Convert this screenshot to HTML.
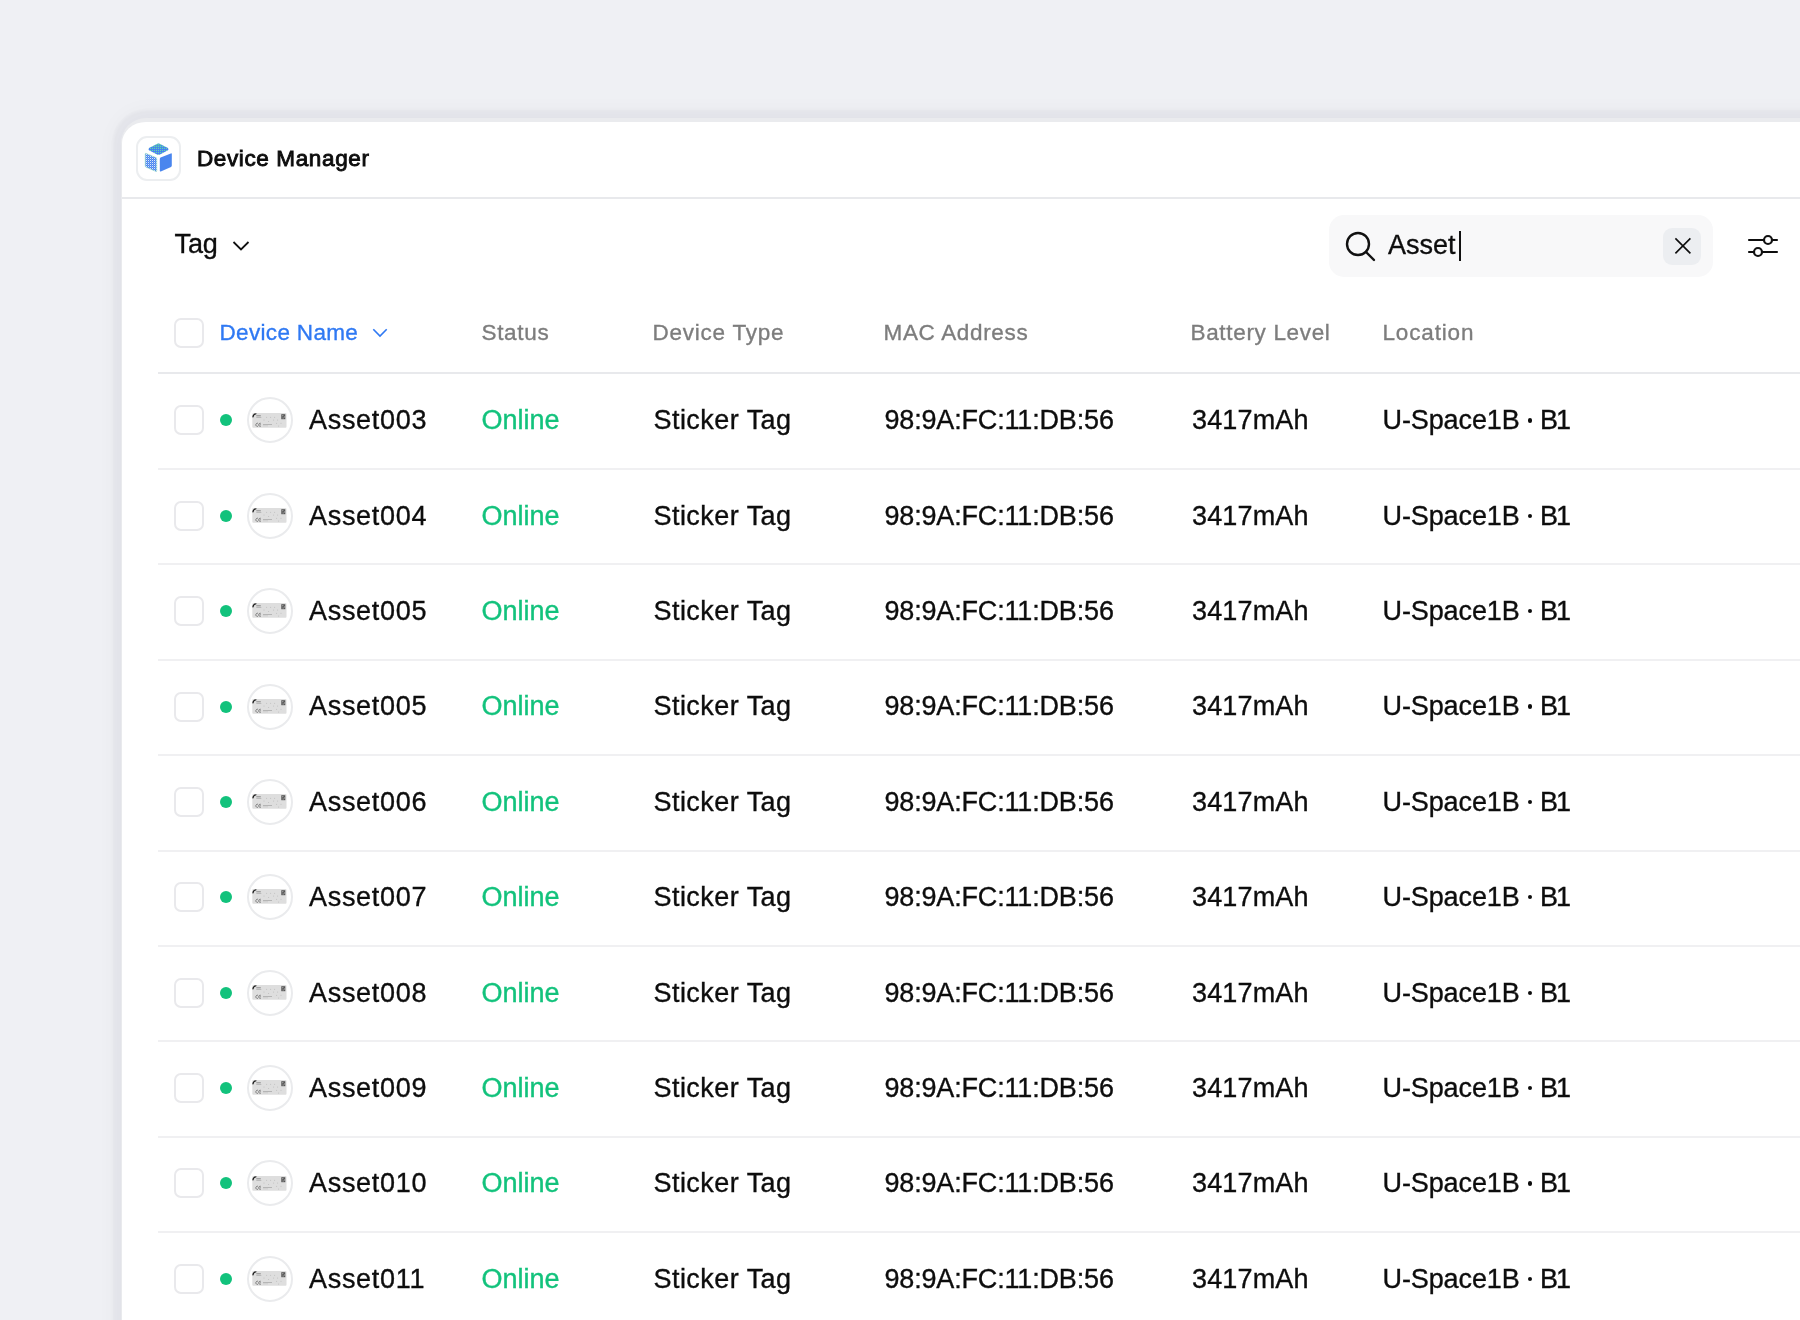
<!DOCTYPE html>
<html><head><meta charset="utf-8">
<style>
html,body{margin:0;padding:0;}
body{width:1800px;height:1320px;overflow:hidden;background:#eff0f4;position:relative;font-family:"Liberation Sans",sans-serif;}
.layer{position:absolute;left:0;top:0;width:1800px;height:1320px;will-change:transform;}
.card{position:absolute;left:121px;top:118px;width:1760px;height:1300px;background:#fff;border-left:1px solid #e9eaed;border-top:4px solid #eaebee;border-radius:25px 0 0 0;box-shadow:0 0 3px 8px rgba(25,35,70,0.03), 0 0 22px 6px rgba(25,35,70,0.035);}
.t{position:absolute;white-space:nowrap;line-height:1;-webkit-text-stroke:0.35px currentColor;}
.ic{position:absolute;}
.cb{position:absolute;left:174px;width:26px;height:26px;border:2px solid #e9e9ec;border-radius:7px;background:#fff;}
.dot{position:absolute;left:219.5px;width:12px;height:12px;border-radius:50%;background:#12c27c;}
.av{position:absolute;left:247px;width:42px;height:42px;border:2px solid #eaebed;border-radius:50%;background:#fff;box-sizing:content-box;}
.av svg{display:block;}
.md{position:absolute;left:1527.5px;width:4.3px;height:4.3px;border-radius:50%;background:#0d0d0d;}
.sep{position:absolute;left:158px;right:0;height:2px;background:#f0f0f2;}
</style></head><body>
<div class="card"></div>
<div class="layer">
<!-- title bar -->
<div style="position:absolute;left:136px;top:136px;width:41px;height:41px;border:2px solid #eceef0;border-radius:11px;background:#fff;"></div>
<svg class="ic" style="left:136px;top:136px" width="45" height="45" viewBox="136 136 45 45">
  <defs>
    <pattern id="pg" patternUnits="userSpaceOnUse" x="0" y="0" width="2" height="2"><rect width="2" height="2" fill="#4683f0"/><rect width="1" height="1" fill="#66d9a6"/></pattern>
    <pattern id="pw" patternUnits="userSpaceOnUse" x="0" y="0" width="2" height="2"><rect width="2" height="2" fill="#4a86ef"/><rect width="1" height="1" fill="#d8e6fb"/><rect x="1" y="1" width="1" height="1" fill="#6f9ff2"/></pattern>
  <linearGradient id="tg" x1="0" y1="0" x2="0" y2="1"><stop offset="0" stop-color="#5edc9c" stop-opacity="0.5"/><stop offset="0.45" stop-color="#5edc9c" stop-opacity="0"/></linearGradient>
  </defs>
  <path d="M158.5 143.6 Q159.5 143.6 160.5 144.2 L168 148 Q169 149.2 168 150.2 L160.5 154.2 Q158.5 155.2 156.5 154.2 L149 150.2 Q148 149.2 149 148 L156.5 144.2 Q157.5 143.6 158.5 143.6Z" fill="url(#pg)"/>
  <path d="M158.5 143.6 Q159.5 143.6 160.5 144.2 L168 148 Q169 149.2 168 150.2 L160.5 154.2 Q158.5 155.2 156.5 154.2 L149 150.2 Q148 149.2 149 148 L156.5 144.2 Q157.5 143.6 158.5 143.6Z" fill="url(#tg)"/>
  <path d="M145.2 154 Q145.2 153 146.2 153.4 L156 157.6 Q156.8 158 156.8 159 L156.8 170.8 Q156.8 171.8 155.8 171.4 L146 167.2 Q145.2 166.8 145.2 165.8Z" fill="url(#pw)" stroke="#9fe3c4" stroke-width="0.6"/>
  <path d="M159.8 159 Q159.8 158 160.6 157.6 L170.8 153.4 Q171.8 153 171.8 154 L171.8 165.6 Q171.8 166.6 171 167 L160.8 171.4 Q159.8 171.8 159.8 170.8Z" fill="#4a86ee"/>
</svg>
<div class="t" style="left:197px;top:147.55px;font-size:22.5px;font-weight:normal;letter-spacing:0.62px;-webkit-text-stroke:0.9px #0d0d0d;color:#0d0d0d;">Device Manager</div>
<div style="position:absolute;left:122px;right:0;top:197px;height:2px;background:#e8e9ec;"></div>
<!-- toolbar -->
<div class="t" style="left:174.5px;top:231.24px;font-size:27px;color:#0d0d0d;letter-spacing:-0.1px">Tag</div>
<svg class="ic" style="left:232px;top:240px" width="18" height="12" viewBox="0 0 18 12"><path d="M1.5 2 L9 9.5 L16.5 2" fill="none" stroke="#111" stroke-width="1.8"/></svg>
<div style="position:absolute;left:1329px;top:215px;width:384px;height:62px;border-radius:15px;background:#f8f8f9;"></div>
<svg class="ic" style="left:1343px;top:229px" width="36" height="36" viewBox="0 0 36 36"><circle cx="15" cy="15" r="11" fill="none" stroke="#111" stroke-width="2.4"/><path d="M23 23 L31 31" stroke="#111" stroke-width="2.4" stroke-linecap="round"/></svg>
<div class="t" style="left:1388px;top:231.54px;font-size:27px;color:#0d0d0d;">Asset</div>
<div style="position:absolute;left:1459px;top:231px;width:2px;height:30px;background:#111;"></div>
<div style="position:absolute;left:1663px;top:227.5px;width:38px;height:37px;border-radius:9px;background:#eceef1;"></div>
<svg class="ic" style="left:1672px;top:236px" width="20" height="20" viewBox="0 0 20 20"><path d="M3.4 2.4 L18.4 17.4 M18.4 2.4 L3.4 17.4" stroke="#0d0d0d" stroke-width="1.6"/></svg>
<svg class="ic" style="left:1746px;top:232px" width="34" height="28" viewBox="0 0 34 28"><path d="M3 8 H31 M3 20 H31" stroke="#0d0d0d" stroke-width="2.1" stroke-linecap="round"/><circle cx="22" cy="8" r="4" fill="#fff" stroke="#111" stroke-width="2.2"/><circle cx="12" cy="20" r="4" fill="#fff" stroke="#111" stroke-width="2.2"/></svg>
<!-- header -->
<div class="cb" style="top:317.5px"></div>
<div class="t" style="left:219.5px;top:321.75px;font-size:22.5px;color:#2f79f3;letter-spacing:0.33px">Device Name</div>
<svg class="ic" style="left:372px;top:328px" width="16" height="10" viewBox="0 0 16 10"><path d="M1.3 1.3 L8 8.1 L14.7 1.3" fill="none" stroke="#2f79f3" stroke-width="1.6"/></svg>
<div class="t" style="left:481.5px;top:321.75px;font-size:22.5px;color:#7d7d7d;letter-spacing:0.68px">Status</div>
<div class="t" style="left:652.5px;top:321.75px;font-size:22.5px;color:#7d7d7d;letter-spacing:0.76px">Device Type</div>
<div class="t" style="left:883.5px;top:321.75px;font-size:22.5px;color:#7d7d7d;letter-spacing:0.66px">MAC Address</div>
<div class="t" style="left:1190.5px;top:321.75px;font-size:22.5px;color:#7d7d7d;letter-spacing:0.67px">Battery Level</div>
<div class="t" style="left:1382.5px;top:321.75px;font-size:22.5px;color:#7d7d7d;letter-spacing:0.84px">Location</div>
<div class="sep" style="top:372px;background:#e8e9ec"></div>
<!-- rows -->
<div class="cb" style="top:405.40px"></div>
<div class="dot" style="top:414.40px"></div>
<div class="av" style="top:397.40px"><svg width="35" height="15" viewBox="0 0 35 15" style="position:absolute;left:3px;top:13.2px"><rect x="0.3" y="0" width="34.2" height="14.8" rx="1" fill="#dedede"/><path d="M0.3 4.2 Q0.6 0.4 4.2 0.2 L4.6 0.9 Q2 1.6 1.3 4.6Z" fill="#1a1a1a"/><rect x="4.3" y="2.3" width="4.5" height="1" fill="#8a8a8a"/><rect x="4.3" y="4.1" width="5" height="0.8" fill="#b0b0b0"/><path d="M29.3 1.2h4v5h-4z" fill="#555"/><path d="M30.3 2.2h1v1h-1zM32 3.4h0.8v1.2h-0.8zM30.6 4.6h1v1h-1z" fill="#ccc"/><path d="M6 10.3 A1.6 1.6 0 1 0 6 13.3 M8.8 10.3 A1.6 1.6 0 1 0 8.8 13.3 M7.6 11.8h1.2" fill="none" stroke="#444" stroke-width="0.6"/><rect x="11" y="11" width="9" height="0.8" fill="#aaa"/><rect x="11" y="12.6" width="5" height="0.6" fill="#c0c0c0"/><circle cx="14.6" cy="4.2" r="0.5" fill="#bbb"/><circle cx="18.6" cy="4.2" r="0.5" fill="#bbb"/><circle cx="22.6" cy="4.2" r="0.5" fill="#bbb"/><circle cx="12" cy="7" r="0.5" fill="#bbb"/><circle cx="21.6" cy="7" r="0.5" fill="#bbb"/><circle cx="25.6" cy="7" r="0.5" fill="#bbb"/><circle cx="16.6" cy="8.5" r="0.5" fill="#bbb"/><circle cx="24.6" cy="10.3" r="0.5" fill="#bbb"/><circle cx="29" cy="10.3" r="0.5" fill="#bbb"/><circle cx="26.6" cy="13" r="0.5" fill="#bbb"/></svg></div>
<div class="t" style="left:309px;top:407.24px;font-size:27px;color:#0d0d0d;letter-spacing:0.7px">Asset003</div>
<div class="t" style="left:481.5px;top:407.24px;font-size:27px;color:#12c27c;">Online</div>
<div class="t" style="left:653.5px;top:407.24px;font-size:27px;color:#0d0d0d;letter-spacing:0.45px">Sticker Tag</div>
<div class="t" style="left:884.5px;top:407.24px;font-size:27px;color:#0d0d0d;letter-spacing:-0.17px">98:9A:FC:11:DB:56</div>
<div class="t" style="left:1192px;top:407.24px;font-size:27px;color:#0d0d0d;letter-spacing:0.15px">3417mAh</div>
<div class="t" style="left:1382.5px;top:407.24px;font-size:27px;color:#0d0d0d;letter-spacing:-0.1px">U-Space1B</div>
<div class="md" style="top:418.30px"></div>
<div class="t" style="left:1540px;top:407.24px;font-size:27px;color:#0d0d0d;letter-spacing:-2px">B1</div>
<div class="sep" style="top:468.00px"></div>
<div class="cb" style="top:500.78px"></div>
<div class="dot" style="top:509.78px"></div>
<div class="av" style="top:492.78px"><svg width="35" height="15" viewBox="0 0 35 15" style="position:absolute;left:3px;top:13.2px"><rect x="0.3" y="0" width="34.2" height="14.8" rx="1" fill="#dedede"/><path d="M0.3 4.2 Q0.6 0.4 4.2 0.2 L4.6 0.9 Q2 1.6 1.3 4.6Z" fill="#1a1a1a"/><rect x="4.3" y="2.3" width="4.5" height="1" fill="#8a8a8a"/><rect x="4.3" y="4.1" width="5" height="0.8" fill="#b0b0b0"/><path d="M29.3 1.2h4v5h-4z" fill="#555"/><path d="M30.3 2.2h1v1h-1zM32 3.4h0.8v1.2h-0.8zM30.6 4.6h1v1h-1z" fill="#ccc"/><path d="M6 10.3 A1.6 1.6 0 1 0 6 13.3 M8.8 10.3 A1.6 1.6 0 1 0 8.8 13.3 M7.6 11.8h1.2" fill="none" stroke="#444" stroke-width="0.6"/><rect x="11" y="11" width="9" height="0.8" fill="#aaa"/><rect x="11" y="12.6" width="5" height="0.6" fill="#c0c0c0"/><circle cx="14.6" cy="4.2" r="0.5" fill="#bbb"/><circle cx="18.6" cy="4.2" r="0.5" fill="#bbb"/><circle cx="22.6" cy="4.2" r="0.5" fill="#bbb"/><circle cx="12" cy="7" r="0.5" fill="#bbb"/><circle cx="21.6" cy="7" r="0.5" fill="#bbb"/><circle cx="25.6" cy="7" r="0.5" fill="#bbb"/><circle cx="16.6" cy="8.5" r="0.5" fill="#bbb"/><circle cx="24.6" cy="10.3" r="0.5" fill="#bbb"/><circle cx="29" cy="10.3" r="0.5" fill="#bbb"/><circle cx="26.6" cy="13" r="0.5" fill="#bbb"/></svg></div>
<div class="t" style="left:309px;top:502.62px;font-size:27px;color:#0d0d0d;letter-spacing:0.7px">Asset004</div>
<div class="t" style="left:481.5px;top:502.62px;font-size:27px;color:#12c27c;">Online</div>
<div class="t" style="left:653.5px;top:502.62px;font-size:27px;color:#0d0d0d;letter-spacing:0.45px">Sticker Tag</div>
<div class="t" style="left:884.5px;top:502.62px;font-size:27px;color:#0d0d0d;letter-spacing:-0.17px">98:9A:FC:11:DB:56</div>
<div class="t" style="left:1192px;top:502.62px;font-size:27px;color:#0d0d0d;letter-spacing:0.15px">3417mAh</div>
<div class="t" style="left:1382.5px;top:502.62px;font-size:27px;color:#0d0d0d;letter-spacing:-0.1px">U-Space1B</div>
<div class="md" style="top:513.68px"></div>
<div class="t" style="left:1540px;top:502.62px;font-size:27px;color:#0d0d0d;letter-spacing:-2px">B1</div>
<div class="sep" style="top:563.38px"></div>
<div class="cb" style="top:596.16px"></div>
<div class="dot" style="top:605.16px"></div>
<div class="av" style="top:588.16px"><svg width="35" height="15" viewBox="0 0 35 15" style="position:absolute;left:3px;top:13.2px"><rect x="0.3" y="0" width="34.2" height="14.8" rx="1" fill="#dedede"/><path d="M0.3 4.2 Q0.6 0.4 4.2 0.2 L4.6 0.9 Q2 1.6 1.3 4.6Z" fill="#1a1a1a"/><rect x="4.3" y="2.3" width="4.5" height="1" fill="#8a8a8a"/><rect x="4.3" y="4.1" width="5" height="0.8" fill="#b0b0b0"/><path d="M29.3 1.2h4v5h-4z" fill="#555"/><path d="M30.3 2.2h1v1h-1zM32 3.4h0.8v1.2h-0.8zM30.6 4.6h1v1h-1z" fill="#ccc"/><path d="M6 10.3 A1.6 1.6 0 1 0 6 13.3 M8.8 10.3 A1.6 1.6 0 1 0 8.8 13.3 M7.6 11.8h1.2" fill="none" stroke="#444" stroke-width="0.6"/><rect x="11" y="11" width="9" height="0.8" fill="#aaa"/><rect x="11" y="12.6" width="5" height="0.6" fill="#c0c0c0"/><circle cx="14.6" cy="4.2" r="0.5" fill="#bbb"/><circle cx="18.6" cy="4.2" r="0.5" fill="#bbb"/><circle cx="22.6" cy="4.2" r="0.5" fill="#bbb"/><circle cx="12" cy="7" r="0.5" fill="#bbb"/><circle cx="21.6" cy="7" r="0.5" fill="#bbb"/><circle cx="25.6" cy="7" r="0.5" fill="#bbb"/><circle cx="16.6" cy="8.5" r="0.5" fill="#bbb"/><circle cx="24.6" cy="10.3" r="0.5" fill="#bbb"/><circle cx="29" cy="10.3" r="0.5" fill="#bbb"/><circle cx="26.6" cy="13" r="0.5" fill="#bbb"/></svg></div>
<div class="t" style="left:309px;top:598.00px;font-size:27px;color:#0d0d0d;letter-spacing:0.7px">Asset005</div>
<div class="t" style="left:481.5px;top:598.00px;font-size:27px;color:#12c27c;">Online</div>
<div class="t" style="left:653.5px;top:598.00px;font-size:27px;color:#0d0d0d;letter-spacing:0.45px">Sticker Tag</div>
<div class="t" style="left:884.5px;top:598.00px;font-size:27px;color:#0d0d0d;letter-spacing:-0.17px">98:9A:FC:11:DB:56</div>
<div class="t" style="left:1192px;top:598.00px;font-size:27px;color:#0d0d0d;letter-spacing:0.15px">3417mAh</div>
<div class="t" style="left:1382.5px;top:598.00px;font-size:27px;color:#0d0d0d;letter-spacing:-0.1px">U-Space1B</div>
<div class="md" style="top:609.06px"></div>
<div class="t" style="left:1540px;top:598.00px;font-size:27px;color:#0d0d0d;letter-spacing:-2px">B1</div>
<div class="sep" style="top:658.76px"></div>
<div class="cb" style="top:691.54px"></div>
<div class="dot" style="top:700.54px"></div>
<div class="av" style="top:683.54px"><svg width="35" height="15" viewBox="0 0 35 15" style="position:absolute;left:3px;top:13.2px"><rect x="0.3" y="0" width="34.2" height="14.8" rx="1" fill="#dedede"/><path d="M0.3 4.2 Q0.6 0.4 4.2 0.2 L4.6 0.9 Q2 1.6 1.3 4.6Z" fill="#1a1a1a"/><rect x="4.3" y="2.3" width="4.5" height="1" fill="#8a8a8a"/><rect x="4.3" y="4.1" width="5" height="0.8" fill="#b0b0b0"/><path d="M29.3 1.2h4v5h-4z" fill="#555"/><path d="M30.3 2.2h1v1h-1zM32 3.4h0.8v1.2h-0.8zM30.6 4.6h1v1h-1z" fill="#ccc"/><path d="M6 10.3 A1.6 1.6 0 1 0 6 13.3 M8.8 10.3 A1.6 1.6 0 1 0 8.8 13.3 M7.6 11.8h1.2" fill="none" stroke="#444" stroke-width="0.6"/><rect x="11" y="11" width="9" height="0.8" fill="#aaa"/><rect x="11" y="12.6" width="5" height="0.6" fill="#c0c0c0"/><circle cx="14.6" cy="4.2" r="0.5" fill="#bbb"/><circle cx="18.6" cy="4.2" r="0.5" fill="#bbb"/><circle cx="22.6" cy="4.2" r="0.5" fill="#bbb"/><circle cx="12" cy="7" r="0.5" fill="#bbb"/><circle cx="21.6" cy="7" r="0.5" fill="#bbb"/><circle cx="25.6" cy="7" r="0.5" fill="#bbb"/><circle cx="16.6" cy="8.5" r="0.5" fill="#bbb"/><circle cx="24.6" cy="10.3" r="0.5" fill="#bbb"/><circle cx="29" cy="10.3" r="0.5" fill="#bbb"/><circle cx="26.6" cy="13" r="0.5" fill="#bbb"/></svg></div>
<div class="t" style="left:309px;top:693.38px;font-size:27px;color:#0d0d0d;letter-spacing:0.7px">Asset005</div>
<div class="t" style="left:481.5px;top:693.38px;font-size:27px;color:#12c27c;">Online</div>
<div class="t" style="left:653.5px;top:693.38px;font-size:27px;color:#0d0d0d;letter-spacing:0.45px">Sticker Tag</div>
<div class="t" style="left:884.5px;top:693.38px;font-size:27px;color:#0d0d0d;letter-spacing:-0.17px">98:9A:FC:11:DB:56</div>
<div class="t" style="left:1192px;top:693.38px;font-size:27px;color:#0d0d0d;letter-spacing:0.15px">3417mAh</div>
<div class="t" style="left:1382.5px;top:693.38px;font-size:27px;color:#0d0d0d;letter-spacing:-0.1px">U-Space1B</div>
<div class="md" style="top:704.44px"></div>
<div class="t" style="left:1540px;top:693.38px;font-size:27px;color:#0d0d0d;letter-spacing:-2px">B1</div>
<div class="sep" style="top:754.14px"></div>
<div class="cb" style="top:786.92px"></div>
<div class="dot" style="top:795.92px"></div>
<div class="av" style="top:778.92px"><svg width="35" height="15" viewBox="0 0 35 15" style="position:absolute;left:3px;top:13.2px"><rect x="0.3" y="0" width="34.2" height="14.8" rx="1" fill="#dedede"/><path d="M0.3 4.2 Q0.6 0.4 4.2 0.2 L4.6 0.9 Q2 1.6 1.3 4.6Z" fill="#1a1a1a"/><rect x="4.3" y="2.3" width="4.5" height="1" fill="#8a8a8a"/><rect x="4.3" y="4.1" width="5" height="0.8" fill="#b0b0b0"/><path d="M29.3 1.2h4v5h-4z" fill="#555"/><path d="M30.3 2.2h1v1h-1zM32 3.4h0.8v1.2h-0.8zM30.6 4.6h1v1h-1z" fill="#ccc"/><path d="M6 10.3 A1.6 1.6 0 1 0 6 13.3 M8.8 10.3 A1.6 1.6 0 1 0 8.8 13.3 M7.6 11.8h1.2" fill="none" stroke="#444" stroke-width="0.6"/><rect x="11" y="11" width="9" height="0.8" fill="#aaa"/><rect x="11" y="12.6" width="5" height="0.6" fill="#c0c0c0"/><circle cx="14.6" cy="4.2" r="0.5" fill="#bbb"/><circle cx="18.6" cy="4.2" r="0.5" fill="#bbb"/><circle cx="22.6" cy="4.2" r="0.5" fill="#bbb"/><circle cx="12" cy="7" r="0.5" fill="#bbb"/><circle cx="21.6" cy="7" r="0.5" fill="#bbb"/><circle cx="25.6" cy="7" r="0.5" fill="#bbb"/><circle cx="16.6" cy="8.5" r="0.5" fill="#bbb"/><circle cx="24.6" cy="10.3" r="0.5" fill="#bbb"/><circle cx="29" cy="10.3" r="0.5" fill="#bbb"/><circle cx="26.6" cy="13" r="0.5" fill="#bbb"/></svg></div>
<div class="t" style="left:309px;top:788.76px;font-size:27px;color:#0d0d0d;letter-spacing:0.7px">Asset006</div>
<div class="t" style="left:481.5px;top:788.76px;font-size:27px;color:#12c27c;">Online</div>
<div class="t" style="left:653.5px;top:788.76px;font-size:27px;color:#0d0d0d;letter-spacing:0.45px">Sticker Tag</div>
<div class="t" style="left:884.5px;top:788.76px;font-size:27px;color:#0d0d0d;letter-spacing:-0.17px">98:9A:FC:11:DB:56</div>
<div class="t" style="left:1192px;top:788.76px;font-size:27px;color:#0d0d0d;letter-spacing:0.15px">3417mAh</div>
<div class="t" style="left:1382.5px;top:788.76px;font-size:27px;color:#0d0d0d;letter-spacing:-0.1px">U-Space1B</div>
<div class="md" style="top:799.82px"></div>
<div class="t" style="left:1540px;top:788.76px;font-size:27px;color:#0d0d0d;letter-spacing:-2px">B1</div>
<div class="sep" style="top:849.52px"></div>
<div class="cb" style="top:882.30px"></div>
<div class="dot" style="top:891.30px"></div>
<div class="av" style="top:874.30px"><svg width="35" height="15" viewBox="0 0 35 15" style="position:absolute;left:3px;top:13.2px"><rect x="0.3" y="0" width="34.2" height="14.8" rx="1" fill="#dedede"/><path d="M0.3 4.2 Q0.6 0.4 4.2 0.2 L4.6 0.9 Q2 1.6 1.3 4.6Z" fill="#1a1a1a"/><rect x="4.3" y="2.3" width="4.5" height="1" fill="#8a8a8a"/><rect x="4.3" y="4.1" width="5" height="0.8" fill="#b0b0b0"/><path d="M29.3 1.2h4v5h-4z" fill="#555"/><path d="M30.3 2.2h1v1h-1zM32 3.4h0.8v1.2h-0.8zM30.6 4.6h1v1h-1z" fill="#ccc"/><path d="M6 10.3 A1.6 1.6 0 1 0 6 13.3 M8.8 10.3 A1.6 1.6 0 1 0 8.8 13.3 M7.6 11.8h1.2" fill="none" stroke="#444" stroke-width="0.6"/><rect x="11" y="11" width="9" height="0.8" fill="#aaa"/><rect x="11" y="12.6" width="5" height="0.6" fill="#c0c0c0"/><circle cx="14.6" cy="4.2" r="0.5" fill="#bbb"/><circle cx="18.6" cy="4.2" r="0.5" fill="#bbb"/><circle cx="22.6" cy="4.2" r="0.5" fill="#bbb"/><circle cx="12" cy="7" r="0.5" fill="#bbb"/><circle cx="21.6" cy="7" r="0.5" fill="#bbb"/><circle cx="25.6" cy="7" r="0.5" fill="#bbb"/><circle cx="16.6" cy="8.5" r="0.5" fill="#bbb"/><circle cx="24.6" cy="10.3" r="0.5" fill="#bbb"/><circle cx="29" cy="10.3" r="0.5" fill="#bbb"/><circle cx="26.6" cy="13" r="0.5" fill="#bbb"/></svg></div>
<div class="t" style="left:309px;top:884.14px;font-size:27px;color:#0d0d0d;letter-spacing:0.7px">Asset007</div>
<div class="t" style="left:481.5px;top:884.14px;font-size:27px;color:#12c27c;">Online</div>
<div class="t" style="left:653.5px;top:884.14px;font-size:27px;color:#0d0d0d;letter-spacing:0.45px">Sticker Tag</div>
<div class="t" style="left:884.5px;top:884.14px;font-size:27px;color:#0d0d0d;letter-spacing:-0.17px">98:9A:FC:11:DB:56</div>
<div class="t" style="left:1192px;top:884.14px;font-size:27px;color:#0d0d0d;letter-spacing:0.15px">3417mAh</div>
<div class="t" style="left:1382.5px;top:884.14px;font-size:27px;color:#0d0d0d;letter-spacing:-0.1px">U-Space1B</div>
<div class="md" style="top:895.20px"></div>
<div class="t" style="left:1540px;top:884.14px;font-size:27px;color:#0d0d0d;letter-spacing:-2px">B1</div>
<div class="sep" style="top:944.90px"></div>
<div class="cb" style="top:977.68px"></div>
<div class="dot" style="top:986.68px"></div>
<div class="av" style="top:969.68px"><svg width="35" height="15" viewBox="0 0 35 15" style="position:absolute;left:3px;top:13.2px"><rect x="0.3" y="0" width="34.2" height="14.8" rx="1" fill="#dedede"/><path d="M0.3 4.2 Q0.6 0.4 4.2 0.2 L4.6 0.9 Q2 1.6 1.3 4.6Z" fill="#1a1a1a"/><rect x="4.3" y="2.3" width="4.5" height="1" fill="#8a8a8a"/><rect x="4.3" y="4.1" width="5" height="0.8" fill="#b0b0b0"/><path d="M29.3 1.2h4v5h-4z" fill="#555"/><path d="M30.3 2.2h1v1h-1zM32 3.4h0.8v1.2h-0.8zM30.6 4.6h1v1h-1z" fill="#ccc"/><path d="M6 10.3 A1.6 1.6 0 1 0 6 13.3 M8.8 10.3 A1.6 1.6 0 1 0 8.8 13.3 M7.6 11.8h1.2" fill="none" stroke="#444" stroke-width="0.6"/><rect x="11" y="11" width="9" height="0.8" fill="#aaa"/><rect x="11" y="12.6" width="5" height="0.6" fill="#c0c0c0"/><circle cx="14.6" cy="4.2" r="0.5" fill="#bbb"/><circle cx="18.6" cy="4.2" r="0.5" fill="#bbb"/><circle cx="22.6" cy="4.2" r="0.5" fill="#bbb"/><circle cx="12" cy="7" r="0.5" fill="#bbb"/><circle cx="21.6" cy="7" r="0.5" fill="#bbb"/><circle cx="25.6" cy="7" r="0.5" fill="#bbb"/><circle cx="16.6" cy="8.5" r="0.5" fill="#bbb"/><circle cx="24.6" cy="10.3" r="0.5" fill="#bbb"/><circle cx="29" cy="10.3" r="0.5" fill="#bbb"/><circle cx="26.6" cy="13" r="0.5" fill="#bbb"/></svg></div>
<div class="t" style="left:309px;top:979.52px;font-size:27px;color:#0d0d0d;letter-spacing:0.7px">Asset008</div>
<div class="t" style="left:481.5px;top:979.52px;font-size:27px;color:#12c27c;">Online</div>
<div class="t" style="left:653.5px;top:979.52px;font-size:27px;color:#0d0d0d;letter-spacing:0.45px">Sticker Tag</div>
<div class="t" style="left:884.5px;top:979.52px;font-size:27px;color:#0d0d0d;letter-spacing:-0.17px">98:9A:FC:11:DB:56</div>
<div class="t" style="left:1192px;top:979.52px;font-size:27px;color:#0d0d0d;letter-spacing:0.15px">3417mAh</div>
<div class="t" style="left:1382.5px;top:979.52px;font-size:27px;color:#0d0d0d;letter-spacing:-0.1px">U-Space1B</div>
<div class="md" style="top:990.58px"></div>
<div class="t" style="left:1540px;top:979.52px;font-size:27px;color:#0d0d0d;letter-spacing:-2px">B1</div>
<div class="sep" style="top:1040.28px"></div>
<div class="cb" style="top:1073.06px"></div>
<div class="dot" style="top:1082.06px"></div>
<div class="av" style="top:1065.06px"><svg width="35" height="15" viewBox="0 0 35 15" style="position:absolute;left:3px;top:13.2px"><rect x="0.3" y="0" width="34.2" height="14.8" rx="1" fill="#dedede"/><path d="M0.3 4.2 Q0.6 0.4 4.2 0.2 L4.6 0.9 Q2 1.6 1.3 4.6Z" fill="#1a1a1a"/><rect x="4.3" y="2.3" width="4.5" height="1" fill="#8a8a8a"/><rect x="4.3" y="4.1" width="5" height="0.8" fill="#b0b0b0"/><path d="M29.3 1.2h4v5h-4z" fill="#555"/><path d="M30.3 2.2h1v1h-1zM32 3.4h0.8v1.2h-0.8zM30.6 4.6h1v1h-1z" fill="#ccc"/><path d="M6 10.3 A1.6 1.6 0 1 0 6 13.3 M8.8 10.3 A1.6 1.6 0 1 0 8.8 13.3 M7.6 11.8h1.2" fill="none" stroke="#444" stroke-width="0.6"/><rect x="11" y="11" width="9" height="0.8" fill="#aaa"/><rect x="11" y="12.6" width="5" height="0.6" fill="#c0c0c0"/><circle cx="14.6" cy="4.2" r="0.5" fill="#bbb"/><circle cx="18.6" cy="4.2" r="0.5" fill="#bbb"/><circle cx="22.6" cy="4.2" r="0.5" fill="#bbb"/><circle cx="12" cy="7" r="0.5" fill="#bbb"/><circle cx="21.6" cy="7" r="0.5" fill="#bbb"/><circle cx="25.6" cy="7" r="0.5" fill="#bbb"/><circle cx="16.6" cy="8.5" r="0.5" fill="#bbb"/><circle cx="24.6" cy="10.3" r="0.5" fill="#bbb"/><circle cx="29" cy="10.3" r="0.5" fill="#bbb"/><circle cx="26.6" cy="13" r="0.5" fill="#bbb"/></svg></div>
<div class="t" style="left:309px;top:1074.90px;font-size:27px;color:#0d0d0d;letter-spacing:0.7px">Asset009</div>
<div class="t" style="left:481.5px;top:1074.90px;font-size:27px;color:#12c27c;">Online</div>
<div class="t" style="left:653.5px;top:1074.90px;font-size:27px;color:#0d0d0d;letter-spacing:0.45px">Sticker Tag</div>
<div class="t" style="left:884.5px;top:1074.90px;font-size:27px;color:#0d0d0d;letter-spacing:-0.17px">98:9A:FC:11:DB:56</div>
<div class="t" style="left:1192px;top:1074.90px;font-size:27px;color:#0d0d0d;letter-spacing:0.15px">3417mAh</div>
<div class="t" style="left:1382.5px;top:1074.90px;font-size:27px;color:#0d0d0d;letter-spacing:-0.1px">U-Space1B</div>
<div class="md" style="top:1085.96px"></div>
<div class="t" style="left:1540px;top:1074.90px;font-size:27px;color:#0d0d0d;letter-spacing:-2px">B1</div>
<div class="sep" style="top:1135.66px"></div>
<div class="cb" style="top:1168.44px"></div>
<div class="dot" style="top:1177.44px"></div>
<div class="av" style="top:1160.44px"><svg width="35" height="15" viewBox="0 0 35 15" style="position:absolute;left:3px;top:13.2px"><rect x="0.3" y="0" width="34.2" height="14.8" rx="1" fill="#dedede"/><path d="M0.3 4.2 Q0.6 0.4 4.2 0.2 L4.6 0.9 Q2 1.6 1.3 4.6Z" fill="#1a1a1a"/><rect x="4.3" y="2.3" width="4.5" height="1" fill="#8a8a8a"/><rect x="4.3" y="4.1" width="5" height="0.8" fill="#b0b0b0"/><path d="M29.3 1.2h4v5h-4z" fill="#555"/><path d="M30.3 2.2h1v1h-1zM32 3.4h0.8v1.2h-0.8zM30.6 4.6h1v1h-1z" fill="#ccc"/><path d="M6 10.3 A1.6 1.6 0 1 0 6 13.3 M8.8 10.3 A1.6 1.6 0 1 0 8.8 13.3 M7.6 11.8h1.2" fill="none" stroke="#444" stroke-width="0.6"/><rect x="11" y="11" width="9" height="0.8" fill="#aaa"/><rect x="11" y="12.6" width="5" height="0.6" fill="#c0c0c0"/><circle cx="14.6" cy="4.2" r="0.5" fill="#bbb"/><circle cx="18.6" cy="4.2" r="0.5" fill="#bbb"/><circle cx="22.6" cy="4.2" r="0.5" fill="#bbb"/><circle cx="12" cy="7" r="0.5" fill="#bbb"/><circle cx="21.6" cy="7" r="0.5" fill="#bbb"/><circle cx="25.6" cy="7" r="0.5" fill="#bbb"/><circle cx="16.6" cy="8.5" r="0.5" fill="#bbb"/><circle cx="24.6" cy="10.3" r="0.5" fill="#bbb"/><circle cx="29" cy="10.3" r="0.5" fill="#bbb"/><circle cx="26.6" cy="13" r="0.5" fill="#bbb"/></svg></div>
<div class="t" style="left:309px;top:1170.28px;font-size:27px;color:#0d0d0d;letter-spacing:0.7px">Asset010</div>
<div class="t" style="left:481.5px;top:1170.28px;font-size:27px;color:#12c27c;">Online</div>
<div class="t" style="left:653.5px;top:1170.28px;font-size:27px;color:#0d0d0d;letter-spacing:0.45px">Sticker Tag</div>
<div class="t" style="left:884.5px;top:1170.28px;font-size:27px;color:#0d0d0d;letter-spacing:-0.17px">98:9A:FC:11:DB:56</div>
<div class="t" style="left:1192px;top:1170.28px;font-size:27px;color:#0d0d0d;letter-spacing:0.15px">3417mAh</div>
<div class="t" style="left:1382.5px;top:1170.28px;font-size:27px;color:#0d0d0d;letter-spacing:-0.1px">U-Space1B</div>
<div class="md" style="top:1181.34px"></div>
<div class="t" style="left:1540px;top:1170.28px;font-size:27px;color:#0d0d0d;letter-spacing:-2px">B1</div>
<div class="sep" style="top:1231.04px"></div>
<div class="cb" style="top:1263.82px"></div>
<div class="dot" style="top:1272.82px"></div>
<div class="av" style="top:1255.82px"><svg width="35" height="15" viewBox="0 0 35 15" style="position:absolute;left:3px;top:13.2px"><rect x="0.3" y="0" width="34.2" height="14.8" rx="1" fill="#dedede"/><path d="M0.3 4.2 Q0.6 0.4 4.2 0.2 L4.6 0.9 Q2 1.6 1.3 4.6Z" fill="#1a1a1a"/><rect x="4.3" y="2.3" width="4.5" height="1" fill="#8a8a8a"/><rect x="4.3" y="4.1" width="5" height="0.8" fill="#b0b0b0"/><path d="M29.3 1.2h4v5h-4z" fill="#555"/><path d="M30.3 2.2h1v1h-1zM32 3.4h0.8v1.2h-0.8zM30.6 4.6h1v1h-1z" fill="#ccc"/><path d="M6 10.3 A1.6 1.6 0 1 0 6 13.3 M8.8 10.3 A1.6 1.6 0 1 0 8.8 13.3 M7.6 11.8h1.2" fill="none" stroke="#444" stroke-width="0.6"/><rect x="11" y="11" width="9" height="0.8" fill="#aaa"/><rect x="11" y="12.6" width="5" height="0.6" fill="#c0c0c0"/><circle cx="14.6" cy="4.2" r="0.5" fill="#bbb"/><circle cx="18.6" cy="4.2" r="0.5" fill="#bbb"/><circle cx="22.6" cy="4.2" r="0.5" fill="#bbb"/><circle cx="12" cy="7" r="0.5" fill="#bbb"/><circle cx="21.6" cy="7" r="0.5" fill="#bbb"/><circle cx="25.6" cy="7" r="0.5" fill="#bbb"/><circle cx="16.6" cy="8.5" r="0.5" fill="#bbb"/><circle cx="24.6" cy="10.3" r="0.5" fill="#bbb"/><circle cx="29" cy="10.3" r="0.5" fill="#bbb"/><circle cx="26.6" cy="13" r="0.5" fill="#bbb"/></svg></div>
<div class="t" style="left:309px;top:1265.66px;font-size:27px;color:#0d0d0d;letter-spacing:0.7px">Asset011</div>
<div class="t" style="left:481.5px;top:1265.66px;font-size:27px;color:#12c27c;">Online</div>
<div class="t" style="left:653.5px;top:1265.66px;font-size:27px;color:#0d0d0d;letter-spacing:0.45px">Sticker Tag</div>
<div class="t" style="left:884.5px;top:1265.66px;font-size:27px;color:#0d0d0d;letter-spacing:-0.17px">98:9A:FC:11:DB:56</div>
<div class="t" style="left:1192px;top:1265.66px;font-size:27px;color:#0d0d0d;letter-spacing:0.15px">3417mAh</div>
<div class="t" style="left:1382.5px;top:1265.66px;font-size:27px;color:#0d0d0d;letter-spacing:-0.1px">U-Space1B</div>
<div class="md" style="top:1276.72px"></div>
<div class="t" style="left:1540px;top:1265.66px;font-size:27px;color:#0d0d0d;letter-spacing:-2px">B1</div>
</div>
</body></html>
